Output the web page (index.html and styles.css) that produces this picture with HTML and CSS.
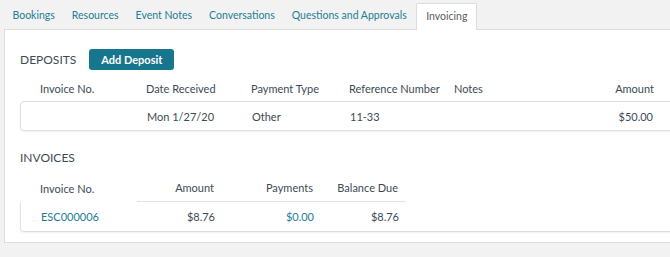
FILE: index.html
```html
<!DOCTYPE html>
<html lang="en">
<head>
  <meta charset="UTF-8">
  <meta name="viewport" content="width=device-width, initial-scale=1.0">
  <title>Invoicing</title>
  <link rel="stylesheet" href="styles.css">
</head>
<body>
  <ul class="tabs">
    <li class="tab">Bookings</li>
    <li class="tab">Resources</li>
    <li class="tab">Event Notes</li>
    <li class="tab">Conversations</li>
    <li class="tab">Questions and Approvals</li>
    <li class="tab active">Invoicing</li>
  </ul>
  <div class="panel">
    <div class="section-head">
      <h3 class="section-title">Deposits</h3>
      <button class="btn">Add Deposit</button>
    </div>
    <div class="deposits">
      <div class="dep-row dep-head">
        <span>Invoice No.</span>
        <span>Date Received</span>
        <span>Payment Type</span>
        <span>Reference Number</span>
        <span>Notes</span>
        <span class="num">Amount</span>
      </div>
      <div class="dep-row dep-body">
        <span></span>
        <span>Mon 1/27/20</span>
        <span>Other</span>
        <span>11-33</span>
        <span></span>
        <span class="num">$50.00</span>
      </div>
    </div>
    <h3 class="section-title invoices-title">Invoices</h3>
    <div class="invoices">
      <div class="inv-row inv-head">
        <span>Invoice No.</span>
        <span class="num line">Amount</span>
        <span class="num line">Payments</span>
        <span class="num line">Balance Due</span>
      </div>
      <div class="inv-row inv-body">
        <span class="link">ESC000006</span>
        <span class="num">$8.76</span>
        <span class="num link">$0.00</span>
        <span class="num">$8.76</span>
      </div>
    </div>
  </div>
</body>
</html>
```

FILE: styles.css
```css
body { font-family: Lato, "Open Sans", sans-serif; font-size: 11px; color: #3d4a54; background: #f2f2f2; margin: 0; overflow: hidden; }
.tabs { display: flex; list-style: none; margin: 0; padding: 3px 0 0 4px; height: 26px; font-size: 10.5px; }
.tab { padding: 0 8.5px; line-height: 24px; color: #227d94; }
.tab.active { background: #fff; color: #555d63; border: 1px solid #dcdcdc; border-bottom: none; border-radius: 2px 2px 0 0; padding: 0 9px; margin-left: 1px; position: relative; height: 26px; z-index: 1; }
.panel { background: #fff; border: 1px solid #dcdcdc; margin: 0 -30px 0 4px; padding: 19px 15px 10px; }
.section-head { display: flex; align-items: center; gap: 13px; height: 21px; }
.section-title { margin: 0; font-size: 12px; font-weight: 400; text-transform: uppercase; color: #3e4a52; line-height: 20px; }
.btn { background: #17758e; color: #fff; border: none; border-radius: 3px; height: 21px; width: 85px; font-family: inherit; font-size: 11px; font-weight: 700; padding: 0; }
.deposits { margin-top: 5px; }
.dep-row { display: grid; grid-template-columns: 106px 105px 98px 105px 1fr 100px; padding: 0 30px 0 20px; align-items: center; }
.dep-head { height: 26px; }
.dep-body { height: 28px; border: 1px solid #dedede; border-radius: 4px; box-shadow: 0 1px 2px rgba(0,0,0,0.06); }
.num { text-align: right; }
.invoices-title { margin-top: 17px; }
.invoices { margin-top: 7px; }
.inv-row { display: grid; grid-template-columns: 117px 85px 99px 85px; align-items: center; }
.inv-row span { padding-right: 8px; }
.inv-row span:first-child { padding-left: 20px; }
.inv-head { height: 27px; }
.inv-head .line { height: 26px; line-height: 26px; border-bottom: 1px solid #e3e3e3; }
.inv-body { height: 29px; border-left: 1px solid #e3e3e3; border-bottom: 1px solid #dedede; border-radius: 0 0 0 4px; box-shadow: 0 1px 2px rgba(0,0,0,0.06); }
.link { color: #227d94; }
```
